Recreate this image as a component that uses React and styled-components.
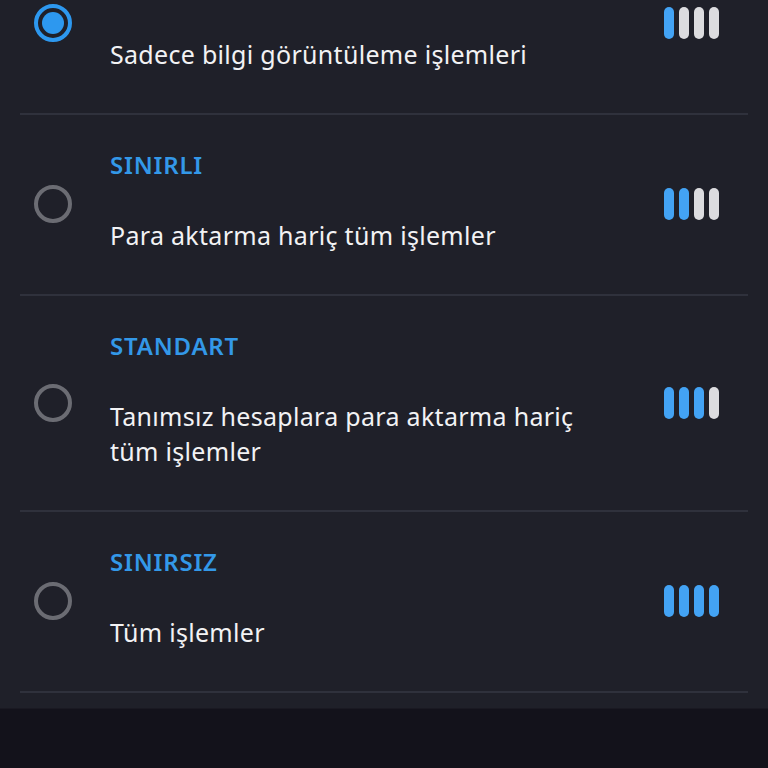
import React from "react";
import styled, { createGlobalStyle } from "styled-components";

const GlobalStyle = createGlobalStyle`
    html, body {
        margin: 0;
        padding: 0;
        background: #1f2029;
    }
    * {
        box-sizing: border-box;
    }
`;

const Screen = styled.div`
    width: 768px;
    height: 768px;
    display: flex;
    flex-direction: column;
    background: #1f2029;
    font-family: "Noto Sans", "Open Sans", sans-serif;
    overflow: hidden;
`;

const ScrollArea = styled.div`
    flex: 1;
    overflow: hidden;
`;

const List = styled.div`
    margin-top: -66px;
    display: flex;
    flex-direction: column;
`;

const Row = styled.div`
    margin: 0 20px;
    display: flex;
    align-items: center;
    padding: 35px 29px 41px 14px;
    border-bottom: 2px solid #2f313c;
`;

const Radio = styled.div`
    width: 38px;
    height: 38px;
    flex-shrink: 0;
    margin-top: 5px;
    border-radius: 50%;
    border: 4px solid ${(props) => (props.checked ? "#2d98ef" : "#6b6c73")};
    display: flex;
    align-items: center;
    justify-content: center;
    &::after {
        content: "";
        display: ${(props) => (props.checked ? "block" : "none")};
        width: 22px;
        height: 22px;
        border-radius: 50%;
        background: #2d98ef;
    }
`;

const Content = styled.div`
    flex: 1;
    max-width: 512px;
    margin-left: 38px;
    display: flex;
    flex-direction: column;
    gap: 38px;
`;

const Title = styled.span`
    font-size: 24px;
    line-height: 30px;
    font-weight: 600;
    letter-spacing: 0.8px;
    color: #3398e8;
`;

const Desc = styled.span`
    font-size: 25px;
    line-height: 35px;
    letter-spacing: 0.3px;
    color: #f2f2f4;
`;

const Bars = styled.div`
    margin-left: auto;
    margin-top: 5px;
    display: flex;
    gap: 5px;
`;

const Bar = styled.div`
    width: 10px;
    height: 32px;
    border-radius: 5px;
    background: ${(props) => (props.active ? "#43a3f4" : "#dcdcdf")};
`;

const BottomBar = styled.div`
    height: 60px;
    flex-shrink: 0;
    background: #13121b;
    border-top: 1px solid #1a1922;
`;

const levels = [
    { title: "GÖRÜNTÜLEME", desc: "Sadece bilgi görüntüleme işlemleri", level: 1, checked: true },
    { title: "SINIRLI", desc: "Para aktarma hariç tüm işlemler", level: 2 },
    { title: "STANDART", desc: "Tanımsız hesaplara para aktarma hariç tüm işlemler", level: 3 },
    { title: "SINIRSIZ", desc: "Tüm işlemler", level: 4 },
];

const App = () => {
    return (
        <>
            <GlobalStyle />
            <Screen>
                <ScrollArea>
                    <List>
                        {levels.map((item) => (
                            <Row key={item.title}>
                                <Radio checked={item.checked} />
                                <Content>
                                    <Title>{item.title}</Title>
                                    <Desc>{item.desc}</Desc>
                                </Content>
                                <Bars>
                                    {[1, 2, 3, 4].map((n) => (
                                        <Bar key={n} active={n <= item.level} />
                                    ))}
                                </Bars>
                            </Row>
                        ))}
                    </List>
                </ScrollArea>
                <BottomBar />
            </Screen>
        </>
    );
};

export default App;
